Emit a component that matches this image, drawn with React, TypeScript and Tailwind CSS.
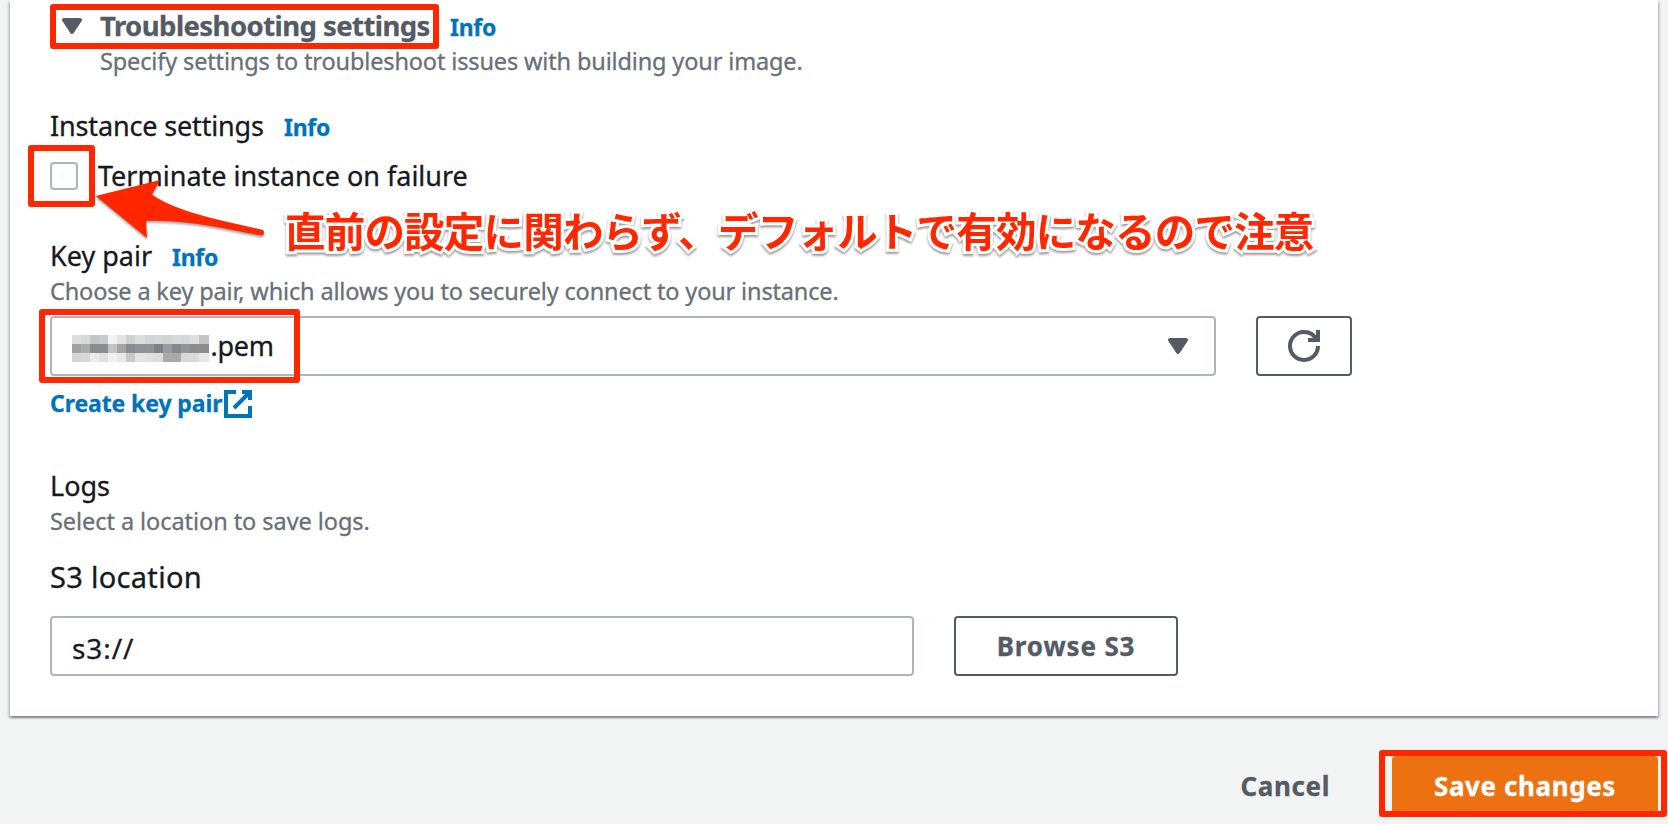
import type { ReactNode } from 'react'

// Grey levels of the redacted part of the key pair name
const maskedCells = [
  ['#dcdddd', '#d7d8d8', '#c3c4c4', '#c9cacb', '#f3f3f3', '#e3e3e4', '#d1d1d3', '#dbdcdd', '#d3d4d5', '#d5d6d7', '#d1d2d4', '#d8d8da', '#d5d6d7', '#dededf', '#c4c4c5'],
  ['#a1a3a3', '#abacae', '#8b8c90', '#8c8d91', '#c1c3c5', '#a3a5a9', '#8a8b8f', '#909195', '#929396', '#808185', '#9a9ba0', '#868789', '#929396', '#8a8b8f', '#8c8d90'],
  ['#d6d3d4', '#d8d6d7', '#ebe9ea', '#e1dfe0', '#f1efef', '#e9e7e8', '#c9c7c9', '#e4e2e3', '#e1e0e1', '#dddbdc', '#aba9ac', '#a9a8ab', '#d9d7d8', '#dbd8da', '#e8e6e7'],
]

export default function App() {
  return (
    <div className="relative h-[824px] w-[1668px] overflow-hidden bg-[#f2f3f3] font-['Noto_Sans','Noto_Sans_CJK_JP',sans-serif] text-[27px] text-[#16191f] [-webkit-text-stroke:0.3px]">
      {/* Settings card */}
      <section className="mx-[10px] h-[716px] bg-white px-10 pt-[6px] shadow-[0_2px_2px_0_rgba(0,28,36,0.3),2px_2px_2px_0_rgba(0,28,36,0.15),-2px_2px_2px_0_rgba(0,28,36,0.15)]">
        <header>
          <div className="flex h-[39px] items-baseline leading-10">
            <CaretIcon className="ml-1.5 mt-1 self-start" />
            <h2 className="ml-3 w-[350px] whitespace-nowrap text-[27.5px] font-bold tracking-[-0.56px] text-[#545b64]">
              Troubleshooting settings
            </h2>
            <InfoLink />
          </div>
          <Description className="ml-[50px] tracking-[-0.14px]">
            Specify settings to troubleshoot issues with building your image.
          </Description>
        </header>

        {/* Instance settings */}
        <div className="mt-[29px]">
          <div className="flex h-[39px] items-baseline leading-10">
            <span className="w-[234px] tracking-[-0.15px]">Instance settings</span>
            <InfoLink />
          </div>
          <label className="mt-[11px] flex h-10 items-center leading-10">
            <span className="size-7 rounded-[4px] border-2 border-[#aab7b8] bg-white" />
            <span className="ml-5">Terminate instance on failure</span>
          </label>
        </div>

        {/* Key pair */}
        <div className="mt-10">
          <div className="flex h-[39px] items-baseline leading-10">
            <span className="w-[122px]">Key pair</span>
            <InfoLink />
          </div>
          <Description className="tracking-[-0.15px]">
            Choose a key pair, which allows you to securely connect to your instance.
          </Description>
          <div className="mt-[9px] flex gap-10">
            <div className="flex h-[60px] w-[1166px] items-center rounded-[4px] border-2 border-[#aab7b8] pl-[19.5px] pr-5">
              <div className="mt-[5px] grid grid-cols-[repeat(15,9.15px)] grid-rows-[repeat(3,9px)]">
                {maskedCells.flat().map((color, i) => (
                  <span key={i} style={{ backgroundColor: color }} />
                ))}
              </div>
              <span className="ml-0.5 tracking-[-0.3px]">.pem</span>
              <CaretIcon className="ml-auto" />
            </div>
            <button className="flex h-[60px] w-24 items-center justify-center rounded-[4px] border-2 border-[#545b64] text-[#545b64]">
              <svg className="size-8" viewBox="0 0 16 16" fill="none" stroke="currentColor" strokeWidth="2">
                <path d="M10 5h5V0" />
                <path d="M15 8a6.957 6.957 0 0 1-7 7 6.957 6.957 0 0 1-7-7 6.957 6.957 0 0 1 7-7 6.87 6.87 0 0 1 6.3 4" />
              </svg>
            </button>
          </div>
          <a className="mt-[11px] flex h-8 items-center text-[23px] font-bold leading-8 text-[#0073bb]">
            <span className="w-[172px] whitespace-nowrap tracking-[-0.1px]">Create key pair</span>
            <svg className="mt-0.5 size-8" viewBox="0 0 16 16" fill="none" stroke="currentColor" strokeWidth="2">
              <path d="M10 2h4v4" />
              <path d="M6 10l8-8" />
              <path d="M14 9.048V14H2V2h5" />
            </svg>
          </a>
        </div>

        {/* Logs */}
        <div className="mt-[47px]">
          <div className="h-[39px] leading-10">Logs</div>
          <Description className="tracking-[-0.06px]">Select a location to save logs.</Description>
          <h3 className="mt-5 text-[29px] leading-10 tracking-[0.3px]">S3 location</h3>
          <div className="mt-[19px] flex gap-10">
            <div className="flex h-[60px] w-[864px] items-center rounded-[4px] border-2 border-[#aab7b8] px-5 pt-[3px] text-[28px] tracking-[0.9px]">
              s3://
            </div>
            <button className="h-[60px] w-56 rounded-[4px] border-2 border-[#545b64] text-[26px] font-bold tracking-[0.85px] text-[#545b64]">
              Browse S3
            </button>
          </div>
        </div>
      </section>

      {/* Form actions */}
      <footer className="mt-10 flex justify-end pr-[10px] text-[26px] font-bold tracking-[0.6px]">
        <button className="mr-[62px] h-[60px] text-[#545b64]">Cancel</button>
        <button className="h-[60px] w-[266px] rounded-[4px] bg-[#ec7211] text-white">Save changes</button>
      </footer>

      {/* Callouts */}
      <Highlight className="left-[50px] top-1 h-[45px] w-[389px]" />
      <Highlight className="left-[27.5px] top-[144.5px] h-[62.5px] w-[67.5px]" />
      <Highlight className="left-[39px] top-[309px] h-[74px] w-[261px]" />
      <Highlight className="left-[1379px] top-[750px] h-[67px] w-[288px]" />
      <svg
        className="absolute left-[90px] top-[170px] h-20 w-[180px] drop-shadow-[0_2px_1px_rgba(0,0,0,0.35)]"
        viewBox="90 170 180 80"
        fill="#ff2600"
      >
        <path d="M95.7 196 L160 180 L152 194.5 C172 209 205 217 261 229.5 A3 3 0 0 1 261 235.5 C225 229 185 219 146 221 L147 238 Z" />
      </svg>
      <p className="absolute left-[285px] top-[201px] whitespace-nowrap font-['Noto_Sans_CJK_JP',sans-serif] text-[40.5px] font-bold leading-[58px] tracking-[-0.8px] text-[#ff2600] drop-shadow-[0_2px_1px_rgba(0,0,0,0.4)] [-webkit-text-stroke:6px_white] [paint-order:stroke_fill]">
        直前の設定に関わらず、デフォルトで有効になるので注意
      </p>
    </div>
  )
}

function Description({ className, children }: { className: string; children: ReactNode }) {
  return <p className={`whitespace-nowrap text-[23.5px] leading-8 text-[#687078] ${className}`}>{children}</p>
}

function InfoLink() {
  return <a className="text-[23px] font-bold tracking-[-0.3px] text-[#0073bb]">Info</a>
}

function CaretIcon({ className }: { className: string }) {
  return (
    <svg
      className={`size-8 shrink-0 ${className}`}
      viewBox="0 0 16 16"
      fill="#545b64"
      stroke="#545b64"
      strokeWidth="2"
      strokeLinejoin="round"
    >
      <path d="M4 5h8l-4 6-4-6z" />
    </svg>
  )
}

function Highlight({ className }: { className: string }) {
  return <div className={`absolute rounded-[3px] border-[6px] border-[#ff2600] ${className}`} />
}
